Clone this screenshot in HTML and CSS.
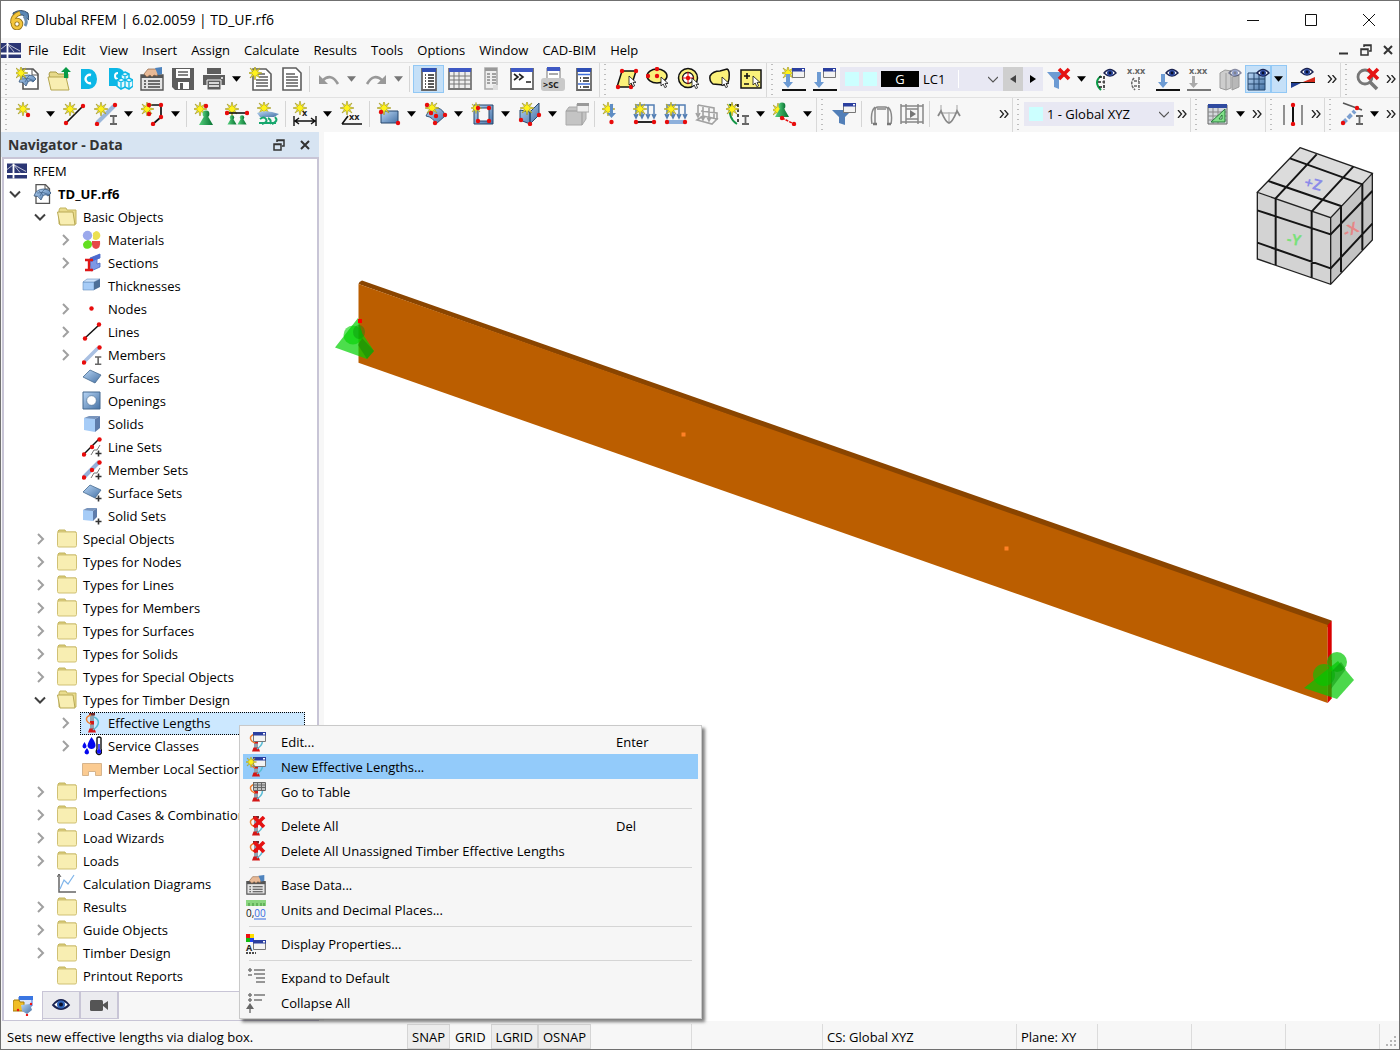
FILE: index.html
```html
<!DOCTYPE html>
<html lang="en">
<head>
<meta charset="utf-8">
<title>Dlubal RFEM | 6.02.0059 | TD_UF.rf6</title>
<link rel="stylesheet" href="styles.css">
</head>
<body>
<svg class="sprite" aria-hidden="true">
  <defs>
    <linearGradient id="gBlue" x1="0" y1="0" x2="1" y2="1"><stop offset="0" stop-color="#b9d6f5"/><stop offset="1" stop-color="#4672a5"/></linearGradient>
    <linearGradient id="gGreen" x1="0" y1="0" x2="1" y2="0"><stop offset="0" stop-color="#55d07d"/><stop offset="1" stop-color="#087332"/></linearGradient>
    <g id="star"><path d="M0-7 1.2-2.4 5-5 2.4-1.2 7 0 2.4 1.2 5 5 1.2 2.400 0 7-1.200 2.400-5 5-2.400 1.200-7 0-2.400-1.200-5-5-1.200-2.400Z" fill="#fff21a" stroke="#a39a2c" stroke-width=".7"/></g>
    <g id="dot"><circle r="2.200" fill="#e80c0c"/></g>
    <g id="win"><path d="M.5.5h12v9H.5z" fill="#f3f3f3" stroke="#777"/><path d="M0 0h13v3.500H0z" fill="#2b3f9f"/><path d="M10 1h2v1.500h-2z" fill="#fff"/></g>
    <g id="eye"><path d="M-6 0Q0-7 6 0 0 6-6 0Z" fill="#fff" stroke="#1b2350" stroke-width="1.400"/><circle r="3" fill="#27449b"/><circle r="1.400" fill="#0a0f2a"/></g>
    <g id="cross"><path d="M-5-5 5 5M5-5-5 5" stroke="#e51212" stroke-width="3.600"/></g>
    <g id="cursor"><path d="M0 0v9l2.200-2 1.600 3.600 1.800-.8L4 6.400h3Z" fill="#fff" stroke="#111" stroke-width=".8"/></g>
    <g id="beamI"><path d="M0 0h7M0 8h7M3.500 0v8" stroke="#666" stroke-width="1.800" fill="none"/></g>
    <g id="plus"><path d="M-3 0h6M0-3v6" stroke="#333" stroke-width="1.600"/></g>
    <g id="dome"><path d="M-8 0Q-6-7 2-7q5 0 7 4L6 0Q2-4-1 4-4-1-8 0Z" fill="url(#gBlue)" stroke="#35577d" stroke-width=".8"/><path d="M-5-3Q2-5 7-1M-3-5Q0-3 1 0M3-7Q0-5-2 0" stroke="#35577d" stroke-width=".6" fill="none"/></g>
    <g id="coneG"><path d="M0-5-7 7H7Z" fill="url(#gGreen)"/><circle cy="-4" r="3.400" fill="url(#gGreen)"/></g>
    <g id="brace"><path d="M8 2h4v16H8z" fill="#8fa3b0"/><path d="M7 0h6v2.500H7z" fill="#702828"/><path d="M8 8h4v3.500H8zM6 19.500l1.500-4h5l1.500 4z" fill="#d31616"/><path d="M9 2C2 4 4 9 9 11" stroke="#ef7d2d" fill="none" stroke-width="1.500"/><path d="M12 4c6 3 6 8-1 13" stroke="#58bcd6" fill="none" stroke-width="1.500"/></g>
    <g id="handcard"><path d="M1 8h22v15H1z" fill="#e4e4e4" stroke="#555" stroke-width="1.400"/><path d="M1 8h22v3H1z" fill="#555"/><path d="M4 14h2M8 14h12M4 17h2M8 17h12M4 20h2M8 20h12" stroke="#444" stroke-width="1.300"/><path d="M4 7l4-5h8l3 3-2 4-3-1-2 2-2-2-3 2z" fill="#e8b996" stroke="#8c6344" stroke-width=".7"/><path d="M15 1l7-1v7l-4 1z" fill="#4e83bd"/></g>
  </defs>

  <symbol id="caret" viewBox="0 0 10 6"><path d="M0 0h10L5 6z" fill="currentColor"/></symbol>
  <symbol id="chev-r" viewBox="0 0 16 16"><path d="M6 3l5 5-5 5" fill="none" stroke="#a0a0a0" stroke-width="2"/></symbol>
  <symbol id="chev-d" viewBox="0 0 16 16"><path d="M3 5.500l5 5 5-5" fill="none" stroke="#404040" stroke-width="2"/></symbol>
  <symbol id="chev-s" viewBox="0 0 10 10"><path d="M0 3l5 5 5-5" fill="none" stroke="#555" stroke-width="1.200"/></symbol>
  <symbol id="more" viewBox="0 0 10 8"><path d="M1 0l3.500 4L1 8M5.500 0 9 4 5.500 8" fill="none" stroke="#222" stroke-width="1.300"/></symbol>

  <symbol id="app" viewBox="0 0 20 20"><path d="M4 3Q12-2 19 3l1 7-5-4Q12 3 5 8Z" fill="#5b87b5" stroke="#2f4a69"/><path d="M15 6q4 5 1 10" stroke="#6c8fb3" stroke-width="3" fill="none"/><path d="M11 3Q3 6 3.500 13" stroke="#96761d" stroke-width="4.800" fill="none"/><circle cx="8" cy="14" r="4" fill="#fff" stroke="#96761d" stroke-width="4.600"/><path d="M11 3Q3 6 3.500 13" stroke="#f4c63c" stroke-width="3" fill="none"/><circle cx="8" cy="14" r="4" fill="none" stroke="#f4c63c" stroke-width="2.800"/></symbol>
  <symbol id="bridge" viewBox="0 0 20 15"><path d="M0 0h20v15H0z" fill="#2b3674"/><path d="M0 10.500h20M6.500 0v15" stroke="#fff" stroke-width="1.800"/><path d="M6.500 1 0 6M6.500 1 19 8M6.500 1 13 9" stroke="#fff" stroke-width=".7"/></symbol>
  <symbol id="modeldoc" viewBox="0 0 20 20"><path d="M4 .7h9.500l4 4v14.600H4z" fill="#fff" stroke="#555" stroke-width="1.300"/><path d="M13 1v4h4" fill="none" stroke="#555"/><use href="#dome" x="10" y="12"/></symbol>

  <symbol id="new" viewBox="0 0 24 24"><path d="M7 2h10l5 5v15H7z" fill="#fff" stroke="#555" stroke-width="1.600"/><path d="M16 2v6h6" fill="none" stroke="#555"/><use href="#dome" x="11" y="15"/><use href="#star" x="5" y="6"/></symbol>
  <symbol id="open" viewBox="0 0 24 24"><path d="M2 7l1-2h6l2 2h10v4H3z" fill="#e6d98a" stroke="#a89a45"/><path d="M1 10h18l3 13H4z" fill="#f8eeb1" stroke="#b5a650"/><path d="M19 0l5 5h-3v6h-4V5h-3z" fill="#0a9a47"/></symbol>
  <symbol id="dcloud" viewBox="0 0 24 24"><path d="M3 2h8a8 10 0 0 1 0 20H3z" fill="#0cb7e6"/><path d="M13 8a4.200 4.200 0 1 0 0 8" fill="none" stroke="#fff" stroke-width="2.400"/></symbol>
  <symbol id="cubes" viewBox="0 0 24 24"><path d="M0 1h8a8 8 0 0 1 8 7L8 19H0z" fill="#0cb7e6"/><path d="M9 6a3 3 0 1 0 0 6" fill="none" stroke="#fff" stroke-width="2"/><path d="M16 5l4 2v4l4 2v6l-4 3-4-2-4 2-4-3v-6l4-2V7z" fill="#e6f8fd" stroke="#0cb7e6" stroke-width="1.500"/><path d="M12 7l4 2 4-2M16 9v5M8 13l4 2 4-2 4 2 4-2M12 15v6M20 15v6M16 13v7M12 11l4 2 4-2" stroke="#0cb7e6" stroke-width="1.300" fill="none"/></symbol>
  <symbol id="base" viewBox="0 0 24 24"><use href="#handcard"/></symbol>
  <symbol id="save" viewBox="0 0 24 24"><path d="M1 1h22v22H4l-3-3z" fill="#5d5d5d"/><path d="M5 2h14v9H5z" fill="#fff"/><path d="M7 5h10M7 8h10" stroke="#5d5d5d" stroke-width="1.400"/><path d="M7 15h11v7H7z" fill="#fff"/><path d="M9 16h3v6H9z" fill="#5d5d5d"/></symbol>
  <symbol id="print" viewBox="0 0 24 24"><path d="M5 1h14v6H5zM1 8h22v10H1z" fill="#5d5d5d"/><path d="M5 13h14v10H5z" fill="#5d5d5d" stroke="#f7f7f7"/><path d="M7 16h10M7 19h10" stroke="#fff" stroke-width="1.400"/><circle cx="20" cy="11" r="1" fill="#fff"/></symbol>
  <symbol id="list" viewBox="0 0 24 24"><path d="M3 1h13l5 5v17H3z" fill="#fff" stroke="#5d5d5d" stroke-width="1.600"/><path d="M6 7h9M6 10h12M6 13h12M6 16h12M6 19h12" stroke="#5d5d5d" stroke-width="1.300"/></symbol>
  <symbol id="newlist" viewBox="0 0 24 24"><path d="M4 2h13l5 5v16H4z" fill="#fff" stroke="#5d5d5d" stroke-width="1.600"/><path d="M9 7h7M10 10h9M7 13h12M7 16h12M7 19h12" stroke="#5d5d5d" stroke-width="1.300"/><use href="#star" x="6" y="6"/></symbol>
  <symbol id="undo" viewBox="0 0 24 24"><path d="M5 14Q14 5 21 17" fill="none" stroke="#999" stroke-width="2.600"/><path d="M2 8v9h9z" fill="#999"/></symbol>
  <symbol id="redo" viewBox="0 0 24 24"><path d="M19 14Q10 5 3 17" fill="none" stroke="#999" stroke-width="2.600"/><path d="M22 8v9h-9z" fill="#999"/></symbol>
  <symbol id="navp" viewBox="0 0 24 24"><path d="M5 2h14v21H5z" fill="#fff" stroke="#666" stroke-width="1.800"/><path d="M5 1h14v4H5z" fill="#2f4fb5"/><path d="M8 8h1M8 11h1M8 14h1M8 17h1M8 20h1M11 8h6M11 11h6M11 14h6M11 17h6M11 20h6" stroke="#222" stroke-width="1.500"/></symbol>
  <symbol id="tablep" viewBox="0 0 24 24"><path d="M1 2h22v20H1z" fill="#eee" stroke="#777" stroke-width="1.800"/><path d="M1 1h22v4H1z" fill="#3f59c4"/><path d="M1 9h22M1 13h22M1 17h22M6 5v17M11 5v17M17 5v17" stroke="#777"/></symbol>
  <symbol id="docg" viewBox="0 0 24 24"><path d="M6 1h12v21H6z" fill="#eee" stroke="#aaa" stroke-width="1.600"/><path d="M6 1h12v3H6z" fill="#999"/><path d="M8 7h3M13 7h4M8 10h3M13 10h4M8 13h3M13 13h4M8 16h3M13 16h4" stroke="#888" stroke-width="1.500"/><path d="M14 18h5v5h-5z" fill="#ddd"/></symbol>
  <symbol id="console" viewBox="0 0 24 24"><path d="M1 2h22v20H1z" fill="#fff" stroke="#666" stroke-width="1.800"/><path d="M1 1h22v4H1z" fill="#3f59c4"/><path d="M4 7l4 3-4 3M9 7l4 3-4 3M16 15h5" fill="none" stroke="#222" stroke-width="1.600"/></symbol>
  <symbol id="navb" viewBox="0 0 24 24"><path d="M5 2h14v21H5z" fill="#fff" stroke="#666" stroke-width="1.800"/><path d="M5 1h14v4H5z" fill="#2f4fb5"/><path d="M8 11h1M8 14h1M8 20h1M11 11h6M11 14h6M11 20h6" stroke="#222" stroke-width="1.500"/><path d="M6 7.500h12M6 17h12" stroke="#3f6fd8" stroke-width="1.600"/></symbol>

  <symbol id="selpoly" viewBox="0 0 24 24"><path d="M7 4h14l-5 16H2z" fill="#fbf17a" stroke="#111" stroke-width="1.500"/><use href="#dot" x="7" y="4"/><use href="#dot" x="21" y="4"/><use href="#dot" x="3" y="20"/><use href="#dot" x="16" y="20"/><use href="#cursor" x="14" y="9"/></symbol>
  <symbol id="selell" viewBox="0 0 24 24"><ellipse cx="11" cy="9" rx="10" ry="7" fill="#fbf17a" stroke="#111" stroke-width="1.500"/><use href="#dot" x="11" y="2"/><use href="#dot" x="11" y="9"/><use href="#dot" x="2" y="9"/><use href="#cursor" x="15" y="10"/></symbol>
  <symbol id="selring" viewBox="0 0 24 24"><circle cx="11" cy="11" r="9.500" fill="#fbf17a" stroke="#111" stroke-width="1.500"/><circle cx="11" cy="11" r="5.500" fill="#fff" stroke="#111" stroke-width="1.300"/><use href="#dot" x="11" y="11"/><path d="M5 11h12M11 5v12" stroke="#e80c0c"/><use href="#cursor" x="15" y="11"/></symbol>
  <symbol id="selfree" viewBox="0 0 24 24"><path d="M2 9Q5 4 12 4l7-2q3 1 2 10-1 6-5 6L5 17Q1 14 2 9Z" fill="#fbf17a" stroke="#111" stroke-width="1.500"/><use href="#cursor" x="14" y="10"/></symbol>
  <symbol id="selpm" viewBox="0 0 24 24"><path d="M2 3h20v18H2z" fill="#fbf17a" stroke="#111" stroke-width="1.500"/><path d="M5 9h6M8 6v6M5 17h5" stroke="#111" stroke-width="1.600"/><use href="#cursor" x="14" y="9"/></symbol>

  <symbol id="newload" viewBox="0 0 24 24"><use href="#star" x="6" y="6"/><path d="M4 7h4v8h3l-5 6-5-6h3z" fill="#6d9bd3"/><use href="#win" x="10" y="1"/><path d="M0 23h24" stroke="#111" stroke-width="2"/></symbol>
  <symbol id="load" viewBox="0 0 24 24"><path d="M4 5h4v10h3l-5 6-5-6h3z" fill="#6d9bd3"/><use href="#win" x="10" y="1"/><path d="M0 23h24" stroke="#111" stroke-width="2"/></symbol>
  <symbol id="filtx" viewBox="0 0 24 24"><path d="M0 5h19l-7 8v9l-5-2v-7z" fill="#6d9bd3"/><use href="#cross" x="17" y="7"/></symbol>
  <symbol id="supeye" viewBox="0 0 24 24"><path d="M7 9Q-1 15 7 23" stroke="#0b9a45" fill="none" stroke-width="2"/><path d="M5 10h5M4 15h5M5 20h4M10 9v14" stroke="#222" stroke-dasharray="3 1.500" stroke-width="1.600" fill="none"/><use href="#eye" x="16" y="6"/></symbol>
  <symbol id="loadeye" viewBox="0 0 24 24"><path d="M5 7h4v8h3l-5 6-5-6h3z" fill="#6d9bd3"/><use href="#eye" x="16" y="6"/><path d="M0 23h24" stroke="#111" stroke-width="2"/></symbol>
  <symbol id="boxeye" viewBox="0 0 24 24"><path d="M2 6l5-3 6 1v17l-5 2-6-2z" fill="#cdcdcd" stroke="#9c9c9c"/><path d="M8 6v17M14 10l7-2v12l-7 3z" fill="#b8b8b8" stroke="#9c9c9c"/><g opacity=".5"><use href="#eye" x="17" y="6"/></g></symbol>
  <symbol id="grideye" viewBox="0 0 24 24"><path d="M2 6h17v17H2z" fill="url(#gBlue)" stroke="#27476d"/><path d="M2 12h17M2 17h17M8 6v17M13 6v17" stroke="#27476d"/><use href="#eye" x="17" y="6"/></symbol>
  <symbol id="diag" viewBox="0 0 24 24"><path d="M0 15h12L0 21z" fill="#203e91"/><path d="M12 15l12-5v5z" fill="#d52a1b"/><path d="M0 15.500h24" stroke="#111"/><use href="#eye" x="16" y="5"/></symbol>
  <symbol id="zoomx" viewBox="0 0 24 24"><circle cx="9" cy="10" r="7" fill="none" stroke="#777" stroke-width="2.800"/><path d="M14 15l7 7" stroke="#777" stroke-width="3.600"/><use href="#cross" x="17" y="7"/></symbol>

  <symbol id="nnode" viewBox="0 0 24 24"><use href="#star" x="7" y="7"/><use href="#dot" x="12" y="13"/></symbol>
  <symbol id="nline" viewBox="0 0 24 24"><path d="M3 21 20 4" stroke="#111" stroke-width="1.700"/><use href="#star" x="7" y="7"/><use href="#dot" x="3" y="21"/><use href="#dot" x="20" y="4"/></symbol>
  <symbol id="nmember" viewBox="0 0 24 24"><path d="M3 21 20 4" stroke="#9bb7da" stroke-width="4"/><use href="#star" x="7" y="7"/><use href="#dot" x="3" y="22"/><use href="#dot" x="21" y="3"/><use href="#beamI" x="16" y="14"/></symbol>
  <symbol id="npoly" viewBox="0 0 24 24"><path d="M8 12V3h12v12l-8 7" stroke="#111" stroke-width="1.700" fill="none"/><use href="#star" x="6" y="7"/><use href="#dot" x="8" y="3"/><use href="#dot" x="20" y="3"/><use href="#dot" x="8" y="12"/><use href="#dot" x="20" y="15"/><use href="#dot" x="12" y="22"/></symbol>
  <symbol id="nsup" viewBox="0 0 24 24"><use href="#star" x="6" y="7"/><use href="#coneG" x="12" y="16"/><use href="#dot" x="12" y="4"/></symbol>
  <symbol id="lsup" viewBox="0 0 24 24"><use href="#star" x="7" y="7"/><path d="M2 11h20" stroke="#111" stroke-width="1.600"/><g transform="translate(7 18) scale(.65)"><use href="#coneG"/></g><g transform="translate(17 18) scale(.65)"><use href="#coneG"/></g><use href="#dot" x="2" y="11"/><use href="#dot" x="22" y="11"/></symbol>
  <symbol id="ssup" viewBox="0 0 24 24"><use href="#star" x="8" y="6"/><path d="M1 11q9-4 22 1l-5 3H4z" fill="url(#gBlue)"/><path d="M4 17q4-3 6 0t-4 5M12 16q4 2 2 6M19 15q4 4-3 7M3 21h17" stroke="#17a76d" fill="none" stroke-width="2"/></symbol>
  <symbol id="nsurf" viewBox="0 0 24 24"><path d="M4 9h17v12H4z" fill="url(#gBlue)" stroke="#27476d"/><use href="#star" x="7" y="6"/><use href="#dot" x="4" y="10"/><use href="#dot" x="21" y="21"/></symbol>
  <symbol id="ncurv" viewBox="0 0 24 24"><path d="M2 14Q6 4 14 6q6 2 7 8l-9 8q-3-7-10-8z" fill="url(#gBlue)" stroke="#35577d"/><use href="#star" x="8" y="6"/><use href="#dot" x="3" y="3"/><use href="#dot" x="7" y="11"/><use href="#dot" x="21" y="13"/><use href="#dot" x="11" y="21"/><use href="#dot" x="12" y="14"/></symbol>
  <symbol id="nopen" viewBox="0 0 24 24"><path d="M3 3h19v19H3z" fill="url(#gBlue)" stroke="#27476d"/><path d="M7 6h11v13H7z" fill="#f7f7f7" stroke="#27476d"/><g transform="translate(5 6) scale(.8)"><use href="#star"/></g><use href="#dot" x="7" y="6"/><use href="#dot" x="18" y="6"/><use href="#dot" x="7" y="19"/><use href="#dot" x="18" y="19"/></symbol>
  <symbol id="nsolid" viewBox="0 0 24 24"><path d="M2 8l10 2v12L2 18zM12 10l9-9v12l-9 9z" fill="url(#gBlue)" stroke="#27476d"/><use href="#star" x="9" y="6"/><use href="#dot" x="3" y="18"/><use href="#dot" x="12" y="22"/><use href="#dot" x="21" y="13"/></symbol>
  <symbol id="gsolid" viewBox="0 0 24 24"><path d="M1 9l3-4h17v12l-4 6H1z" fill="#c4c4c4" stroke="#aaa"/><path d="M1 9h16v14M17 9l4-4" fill="none" stroke="#9b9b9b"/><path d="M12 2h12v8H12z" fill="#eee" stroke="#aaa"/><path d="M12 1h12v3H12z" fill="#999"/></symbol>
  <symbol id="nodeload" viewBox="0 0 24 24"><use href="#star" x="6" y="7"/><path d="M8 2h3v9h3l-4.500 5L5 11h3z" fill="#5f8dc4"/><use href="#dot" x="9.500" y="20"/></symbol>
  <symbol id="lineload" viewBox="0 0 24 24"><path d="M3 3h18v12M3 3v12M9 3v12M15 3v12M1 12l2 4 2-4M7 12l2 4 2-4M13 12l2 4 2-4M19 12l2 4 2-4" fill="none" stroke="#547fb4" stroke-width="1.500"/><use href="#star" x="7" y="7"/><path d="M2 20h20" stroke="#111" stroke-width="1.800"/><use href="#dot" x="3" y="20"/><use href="#dot" x="21" y="20"/></symbol>
  <symbol id="memload" viewBox="0 0 24 24"><path d="M3 3h18v12M3 3v12M9 3v12M15 3v12M1 12l2 4 2-4M7 12l2 4 2-4M13 12l2 4 2-4M19 12l2 4 2-4" fill="none" stroke="#547fb4" stroke-width="1.500"/><use href="#star" x="7" y="7"/><path d="M2 20h20" stroke="#8db0dc" stroke-width="4"/><use href="#dot" x="3" y="20"/><use href="#dot" x="21" y="20"/></symbol>
  <symbol id="gload" viewBox="0 0 24 24"><path d="M3 3l16 3v10M3 3v11M8 4v13M14 5v13M2 18l6-4 14 3-5 5zM6 9l16 2v7M1 11l2 4 2-4M6 14l2 4 2-4M12 15l2 4 2-4" fill="none" stroke="#a2a2a2" stroke-width="1.600"/></symbol>
  <symbol id="imperf" viewBox="0 0 24 24"><path d="M4 2Q2 17 11 22" stroke="#149747" stroke-width="2" fill="none"/><path d="M12 2v20M4 3h8" stroke="#111" stroke-dasharray="3 2" stroke-width="1.500"/><use href="#star" x="6" y="7"/><use href="#beamI" x="16" y="14"/></symbol>
  <symbol id="supmove" viewBox="0 0 24 24"><use href="#star" x="5" y="8"/><use href="#coneG" x="9" y="8"/><path d="M9 16l10 5" stroke="#e80c0c" stroke-width="1.500" stroke-dasharray="3 1"/><use href="#dot" x="9" y="16"/><use href="#dot" x="21" y="22"/></symbol>
  <symbol id="filtwin" viewBox="0 0 24 24"><path d="M0 8h20l-7 7v8l-6-2v-6z" fill="#527fb8"/><use href="#win" x="11" y="1"/></symbol>
  <symbol id="frame" viewBox="0 0 24 24"><path d="M6 22V8q0-3 3-3h7q3 0 3 3v14M3 22Q1 10 6 5M22 22q2-12-3-17M8 7h9" fill="none" stroke="#888" stroke-width="1.500"/><path d="M4 22h4M18 22h4" stroke="#777" stroke-width="2.500"/></symbol>
  <symbol id="film" viewBox="0 0 24 24"><path d="M1 2v20M23 2v20M6 2v20M18 2v20M1 4h22M1 20h22M6 7h12M6 17h12" fill="none" stroke="#888" stroke-width="1.500"/><path d="M10 8l6 4-6 4z" fill="#777"/></symbol>
  <symbol id="moment" viewBox="0 0 24 24"><path d="M4 3v8M12 10v11M20 3v8M4 11h16" stroke="#bbb" stroke-width="1.400"/><path d="M1 14 4 9Q9 21 12 21T20 9l3 5" fill="none" stroke="#888" stroke-width="1.800"/></symbol>
  <symbol id="plane" viewBox="0 0 24 24"><path d="M2 3h19v19H2z" fill="#d4d8dc" stroke="#666"/><path d="M2 2h19v4H2z" fill="#2f4a9f"/><path d="M2 10h19M2 14h19M2 18h19M7 6v16M12 6v16" stroke="#888"/><path d="M5 20h14V7z" fill="#82e08a" stroke="#27793a"/><path d="M13 17h3v-4z" fill="#e9f5e9" stroke="#27793a"/></symbol>
  <symbol id="guides" viewBox="0 0 24 24"><path d="M3 3v20M21 3v20" stroke="#777" stroke-width="1.600"/><path d="M12 3v19" stroke="#111" stroke-width="2"/><use href="#dot" x="12" y="3"/><use href="#dot" x="12" y="22"/></symbol>
  <symbol id="release" viewBox="0 0 24 24"><path d="M3 1l19 7" stroke="#555" stroke-width="1.600"/><path d="M3 21 15 9" stroke="#7b9fd0" stroke-width="4" stroke-dasharray="5 2"/><use href="#dot" x="17" y="6"/><use href="#dot" x="3" y="21"/><use href="#beamI" x="16" y="14"/></symbol>

  <symbol id="folder" viewBox="0 0 20 20"><path d="M1 2l1-1h6l1 2h10v4H1z" fill="#d9cc79" stroke="#c3b45f"/><rect x=".5" y="3" width="19" height="15" rx="1.500" fill="#f8eeb2" stroke="#d0c175"/></symbol>
  <symbol id="folder-o" viewBox="0 0 20 20"><path d="M2 3l1-2h6l1 2h9v14H2z" fill="#e9dc8d" stroke="#c3b45f"/><path d="M.5 5H16l2 13H3z" fill="#f8eeb2" stroke="#b8a955"/></symbol>
  <symbol id="materials" viewBox="0 0 20 20"><circle cx="5.500" cy="5.500" r="4.700" fill="#9ba9ec"/><path d="M14 1a4.500 4.500 0 1 1-3 8V3z" fill="#ebe052"/><path d="M6 10q4 1 4 4t-3 4.500Q1 20 1 14q1-3 5-4z" fill="#63df20"/><path d="M10 11h8q1 7-4 8-5-1-4-8z" fill="#e64848"/></symbol>
  <symbol id="sections" viewBox="0 0 20 20"><path d="M8 5l10-4v4l-3 1v5l3-1v4L9 18z" fill="#7d98e6" stroke="#4867c2" stroke-width=".8"/><path d="M8 5l10-4v4L9 9z" fill="#4c6ad0"/><path d="M3 7h8M3 17h8M7 7v10" stroke="#df1717" stroke-width="2.400"/></symbol>
  <symbol id="thick" viewBox="0 0 20 20"><path d="M1 6h11v8H1z" fill="#a6ccf7" stroke="#668fbd" stroke-width=".6"/><path d="M1 6l4-3h13l-6 3z" fill="#cde3fb" stroke="#668fbd" stroke-width=".6"/><path d="M12 6l6-3v8l-6 3z" fill="#4d7099"/></symbol>
  <symbol id="node" viewBox="0 0 20 20"><circle cx="9.500" cy="9.500" r="2.200" fill="#e80c0c"/></symbol>
  <symbol id="line" viewBox="0 0 20 20"><path d="M3 16 17 3" stroke="#111" stroke-width="1.500"/><use href="#dot" x="3" y="16.500"/><use href="#dot" x="17" y="2.500"/></symbol>
  <symbol id="member" viewBox="0 0 20 20"><path d="M3 16 16 3" stroke="#a9c0e2" stroke-width="3.600"/><use href="#dot" x="2" y="17.500"/><use href="#dot" x="17.500" y="2.500"/><g transform="translate(13 12) scale(.9)"><use href="#beamI"/></g></symbol>
  <symbol id="surface" viewBox="0 0 20 20"><path d="M8 2l11 5-6 8L1 9z" fill="url(#gBlue)" stroke="#45698f" stroke-width=".8"/></symbol>
  <symbol id="opening" viewBox="0 0 20 20"><path d="M1 1h17v17H1z" fill="url(#gBlue)" stroke="#45698f"/><circle cx="9.500" cy="9.500" r="4.800" fill="#fff" stroke="#45698f" stroke-width=".6"/></symbol>
  <symbol id="solid" viewBox="0 0 20 20"><path d="M2 4h11v14l-11-2z" fill="#a6ccf7"/><path d="M2 4l5-2h11l-5 3z" fill="#7894bc"/><path d="M13 5l5-3v12l-5 4z" fill="#5e7cab"/></symbol>
  <symbol id="lineset" viewBox="0 0 20 20"><path d="M2 17 17 2" stroke="#111" stroke-width="1.500"/><path d="M9 18l3-5h3l3-5" stroke="#777" fill="none"/><use href="#dot" x="2" y="17.500"/><use href="#dot" x="10" y="10"/><use href="#dot" x="17.500" y="2.500"/><use href="#plus" x="16.500" y="16.500"/></symbol>
  <symbol id="memberset" viewBox="0 0 20 20"><path d="M2 17 17 2" stroke="#94b0da" stroke-width="4"/><path d="M9 18l3-5h3l3-5" stroke="#777" fill="none"/><use href="#dot" x="2" y="17.500"/><use href="#dot" x="10" y="10"/><use href="#dot" x="17.500" y="2.500"/><use href="#plus" x="16.500" y="16.500"/></symbol>
  <symbol id="surfaceset" viewBox="0 0 20 20"><path d="M8 2l11 5-6 8L1 9z" fill="url(#gBlue)" stroke="#45698f" stroke-width=".8"/><use href="#plus" x="16.500" y="15.500"/></symbol>
  <symbol id="solidset" viewBox="0 0 20 20"><path d="M1 4h10v11l-10-1z" fill="#a6ccf7"/><path d="M1 4l4-2h10l-4 3z" fill="#7894bc"/><path d="M11 5l4-3v9l-4 4z" fill="#5e7cab"/><use href="#plus" x="16.500" y="15.500"/></symbol>
  <symbol id="eff" viewBox="0 0 20 20"><use href="#brace"/></symbol>
  <symbol id="service" viewBox="0 0 20 20"><path d="M9.500 1q4.500 6 4 9-1 3-4 3t-4-3q0-3 4-9zM2.500 6q2 3 2 4.500t-2 2q-2-.5-2-2T2.500 6zM5 12q2 3 2 4.500t-2 2q-2.500-.5-2.500-2T5 12z" fill="#0508ef"/><path d="M15 2q2-2 4 0v11q1.500 3 0 4.500-2 2-4 0-1.500-2 0-4.500z" fill="#fff" stroke="#111" stroke-width="1.400"/><circle cx="17" cy="15.500" r="2.200" fill="#11f"/><path d="M17 8v7" stroke="#11f" stroke-width="1.500"/></symbol>
  <symbol id="notch" viewBox="0 0 20 20"><path d="M.5 4.500h19v12h-6v-4h-7v4h-6z" fill="#fbcb91" stroke="#d6b48c"/></symbol>
  <symbol id="chart" viewBox="0 0 20 20"><path d="M2 0v18h17" fill="none" stroke="#666" stroke-width="1.500"/><path d="M0 3l2-3 2 3" fill="none" stroke="#666"/><path d="M3 15l4-9 4 4 6-9" fill="none" stroke="#7fb5ea" stroke-width="1.200"/></symbol>

  <symbol id="m-edit" viewBox="0 0 20 20"><use href="#brace"/><use href="#win" x="7" y="0"/></symbol>
  <symbol id="m-new" viewBox="0 0 20 20"><use href="#brace"/><use href="#win" x="7" y="0"/><g transform="translate(5 5) scale(.8)"><use href="#star"/></g></symbol>
  <symbol id="m-table" viewBox="0 0 20 20"><use href="#brace"/><path d="M7.500 .5h12v8h-12zM7.500 3h12M7.500 5.500h12M11.500 .5v8M15.500 .5v8" fill="#c2c2c2" stroke="#666"/></symbol>
  <symbol id="m-del" viewBox="0 0 20 20"><use href="#brace"/><use href="#cross" x="13" y="6"/></symbol>
  <symbol id="m-exp" viewBox="0 0 20 20"><path d="M2 2h4M4 0v4M2 7h4M8 2h11M8 6h11M10 10h9M10 14h9" stroke="#777" stroke-width="1.500"/></symbol>
  <symbol id="m-col" viewBox="0 0 20 20"><path d="M2 2h4M4 0v4M2 7h4M4 5v4M8 2h11M8 7h8M4 13v7" stroke="#777" stroke-width="1.500"/><path d="M0 16l4-6 4 6z" fill="#666"/></symbol>

  <symbol id="t-data" viewBox="0 0 20 20"><path d="M6 1h13v9H6z" fill="#dbe6fa" stroke="#3a6ed8"/><path d="M6 0h14v4H6z" fill="#3a76e2"/><path d="M0 6l1-2h5l1 2h4v9H0z" fill="#f0bd25" stroke="#a37c0d"/><path d="M8 9l9-1 2 6-5 4-5-3z" fill="url(#gBlue)"/><g fill="#e11"><circle cx="5" cy="14" r="1.200"/><circle cx="18" cy="8" r="1.200"/><circle cx="14" cy="19" r="1.200"/></g></symbol>
  <symbol id="t-eye" viewBox="0 0 20 20"><path d="M2 10q8-10 16 0-8 8-16 0z" fill="#fff" stroke="#1b2350" stroke-width="1.800"/><circle cx="10" cy="9.500" r="4" fill="#2e62b8"/><circle cx="10" cy="9.500" r="2" fill="#0a0f2a"/></symbol>
  <symbol id="t-cam" viewBox="0 0 20 20"><rect x="1" y="5" width="13" height="11" rx="1.500" fill="#555"/><path d="M13 10l6-4v9z" fill="#555"/></symbol>
</svg>

<div class="window">
  <header class="titlebar">
    <svg class="app-icon"><use href="#app"/></svg>
    <h1 class="title">Dlubal RFEM | 6.02.0059 | TD_UF.rf6</h1>
    <button class="winbtn" aria-label="Minimize"><svg viewBox="0 0 12 12"><path d="M0 6.500h12" stroke="#111"/></svg></button>
    <button class="winbtn" aria-label="Maximize"><svg viewBox="0 0 12 12"><path d="M.5.5h11v11H.5z" fill="none" stroke="#111"/></svg></button>
    <button class="winbtn" aria-label="Close"><svg viewBox="0 0 12 12"><path d="M0 0l12 12M12 0 0 12" stroke="#111"/></svg></button>
  </header>

  <nav class="menubar">
    <svg class="bridge"><use href="#bridge"/></svg>
    <button>File</button><button>Edit</button><button>View</button><button>Insert</button><button>Assign</button><button>Calculate</button><button>Results</button><button>Tools</button><button>Options</button><button>Window</button><button>CAD-BIM</button><button>Help</button>
    <div class="mdi">
      <button aria-label="Minimize document"><svg viewBox="0 0 12 12"><path d="M1 9.500h9" stroke="#333" stroke-width="2"/></svg></button>
      <button aria-label="Restore document"><svg viewBox="0 0 12 12"><path d="M4 3V1h7v6H9M1 5h7v6H1zM1 5.500h7M4 1.500h7" fill="none" stroke="#333" stroke-width="1.500"/></svg></button>
      <button aria-label="Close document"><svg viewBox="0 0 12 12"><path d="M2 2l8 8M10 2l-8 8" stroke="#333" stroke-width="2"/></svg></button>
    </div>
  </nav>

  <div class="toolbar">
    <div class="group">
      <button class="tool" aria-label="New"><svg><use href="#new"/></svg></button>
      <button class="tool" aria-label="Open"><svg><use href="#open"/></svg></button>
      <button class="tool" aria-label="Dlubal Center"><svg><use href="#dcloud"/></svg></button>
      <button class="tool" aria-label="Blocks"><svg><use href="#cubes"/></svg></button>
      <button class="tool" aria-label="Base data"><svg><use href="#base"/></svg></button>
      <button class="tool" aria-label="Save"><svg><use href="#save"/></svg></button>
      <button class="tool" aria-label="Print"><svg><use href="#print"/></svg></button><button class="drop" aria-label="Print options"><svg><use href="#caret"/></svg></button>
      <button class="tool" aria-label="New report"><svg><use href="#newlist"/></svg></button>
      <button class="tool" aria-label="Reports"><svg><use href="#list"/></svg></button>
      <span class="sep"></span>
      <button class="tool" aria-label="Undo"><svg><use href="#undo"/></svg></button><button class="drop dim" aria-label="Undo list"><svg><use href="#caret"/></svg></button>
      <button class="tool" aria-label="Redo"><svg><use href="#redo"/></svg></button><button class="drop dim" aria-label="Redo list"><svg><use href="#caret"/></svg></button>
      <span class="sep"></span>
      <button class="tool on" aria-label="Navigator"><svg><use href="#navp"/></svg></button>
      <button class="tool" aria-label="Tables"><svg><use href="#tablep"/></svg></button>
      <button class="tool" aria-label="Panel"><svg><use href="#docg"/></svg></button>
      <button class="tool" aria-label="Console"><svg><use href="#console"/></svg></button>
      <button class="tool" aria-label="Script manager"><svg viewBox="0 0 24 24"><path d="M6 1h13v11H6z" fill="#fff" stroke="#777"/><path d="M6 0h13v4H6z" fill="#3f59c4"/><path d="M8 7h9" stroke="#555"/><rect y="11" x="0" width="24" height="13" rx="3" fill="#c9c9c9"/><text x="2" y="21" class="glyph-text">&gt;SC</text></svg></button>
      <button class="tool" aria-label="Control panel"><svg><use href="#navb"/></svg></button>
    </div>
    <div class="group">
      <button class="tool" aria-label="Select by rhomboid"><svg><use href="#selpoly"/></svg></button>
      <button class="tool" aria-label="Select by ellipse"><svg><use href="#selell"/></svg></button>
      <button class="tool" aria-label="Select by annulus"><svg><use href="#selring"/></svg></button>
      <button class="tool" aria-label="Select freehand"><svg><use href="#selfree"/></svg></button>
      <button class="tool" aria-label="Add or remove selection"><svg><use href="#selpm"/></svg></button>
    </div>
    <div class="group grow">
      <button class="tool" aria-label="New load case"><svg><use href="#newload"/></svg></button>
      <button class="tool" aria-label="Load cases"><svg><use href="#load"/></svg></button>
      <div class="combo loadcase">
        <span class="swatch"></span><span class="swatch"></span><span class="badge">G</span>
        <select aria-label="Load case"><option>LC1</option></select>
        <span class="rule"></span>
        <svg><use href="#chev-s"/></svg>
      </div>
      <button class="step off" aria-label="Previous load case"><svg viewBox="0 0 6 8"><path d="M6 0v8L0 4z"/></svg></button>
      <button class="step" aria-label="Next load case"><svg viewBox="0 0 6 8"><path d="M0 0v8l6-4z"/></svg></button>
      <button class="tool" aria-label="Remove filter"><svg><use href="#filtx"/></svg></button><button class="drop" aria-label="Filter options"><svg><use href="#caret"/></svg></button>
      <button class="tool" aria-label="Show supports"><svg><use href="#supeye"/></svg></button>
      <button class="tool" aria-label="Support values"><svg viewBox="0 0 24 24"><path d="M9 11Q4 17 10 23M14 10v13M9 14h5M9 19h5" stroke="#666" stroke-dasharray="3 1" fill="none" stroke-width="1.500"/><text x="2" y="7" class="glyph-text grey">x.xx</text></svg></button>
      <button class="tool" aria-label="Show loads"><svg><use href="#loadeye"/></svg></button>
      <button class="tool" aria-label="Load values"><svg viewBox="0 0 24 24"><path d="M5 9h3v7h3l-4.500 5L2 16h3z" fill="#aaa"/><text x="2" y="7" class="glyph-text grey">x.xx</text><path d="M0 23h24" stroke="#777" stroke-width="2"/></svg></button>
      <button class="tool" aria-label="Show solids"><svg><use href="#boxeye"/></svg></button>
      <button class="tool on narrow" aria-label="Show mesh"><svg><use href="#grideye"/></svg></button><button class="drop on" aria-label="Mesh options"><svg><use href="#caret"/></svg></button>
      <button class="tool" aria-label="Show results"><svg><use href="#diag"/></svg></button>
      <button class="more" aria-label="More"><svg><use href="#more"/></svg></button>
    </div>
    <div class="group">
      <button class="tool" aria-label="Reset zoom"><svg><use href="#zoomx"/></svg></button>
      <button class="more" aria-label="More"><svg><use href="#more"/></svg></button>
    </div>
  </div>

  <div class="toolbar">
    <div class="group">
      <button class="tool" aria-label="New node"><svg><use href="#nnode"/></svg></button><button class="drop" aria-label="Node types"><svg><use href="#caret"/></svg></button>
      <button class="tool" aria-label="New line"><svg><use href="#nline"/></svg></button>
      <button class="tool" aria-label="New member"><svg><use href="#nmember"/></svg></button><button class="drop" aria-label="Member types"><svg><use href="#caret"/></svg></button>
      <button class="tool" aria-label="New polyline"><svg><use href="#npoly"/></svg></button><button class="drop" aria-label="Line types"><svg><use href="#caret"/></svg></button>
      <span class="sep"></span>
      <button class="tool" aria-label="Nodal support"><svg><use href="#nsup"/></svg></button>
      <button class="tool" aria-label="Line support"><svg><use href="#lsup"/></svg></button>
      <button class="tool" aria-label="Surface support"><svg><use href="#ssup"/></svg></button>
      <span class="sep"></span>
      <button class="tool" aria-label="Dimension"><svg viewBox="0 0 24 24"><use href="#star" x="7" y="6"/><path d="M1 14v10M23 14v10M2 19h20M6 16l-4 3 4 3M18 16l4 3-4 3" stroke="#111" fill="none" stroke-width="1.400"/><text x="9" y="14" class="glyph-text">x</text></svg></button><button class="drop" aria-label="Dimension types"><svg><use href="#caret"/></svg></button>
      <button class="tool" aria-label="Annotation"><svg viewBox="0 0 24 24"><use href="#star" x="7" y="6"/><path d="M2 22h20M2 22l6-8" stroke="#111" stroke-width="1.600"/><text x="9" y="18" class="glyph-text">xx</text></svg></button>
      <span class="sep"></span>
      <button class="tool" aria-label="New surface"><svg><use href="#nsurf"/></svg></button><button class="drop" aria-label="Surface types"><svg><use href="#caret"/></svg></button>
      <button class="tool" aria-label="Curved surface"><svg><use href="#ncurv"/></svg></button><button class="drop" aria-label="Curved surface types"><svg><use href="#caret"/></svg></button>
      <button class="tool" aria-label="New opening"><svg><use href="#nopen"/></svg></button><button class="drop" aria-label="Opening types"><svg><use href="#caret"/></svg></button>
      <button class="tool" aria-label="New solid"><svg><use href="#nsolid"/></svg></button><button class="drop" aria-label="Solid types"><svg><use href="#caret"/></svg></button>
      <button class="tool" aria-label="Solid details"><svg><use href="#gsolid"/></svg></button>
      <span class="sep"></span>
      <button class="tool" aria-label="Nodal load"><svg><use href="#nodeload"/></svg></button>
      <button class="tool" aria-label="Line load"><svg><use href="#lineload"/></svg></button>
      <button class="tool" aria-label="Member load"><svg><use href="#memload"/></svg></button>
      <button class="tool" aria-label="Surface load"><svg><use href="#gload"/></svg></button>
      <button class="tool" aria-label="Imperfection"><svg><use href="#imperf"/></svg></button><button class="drop" aria-label="Imperfection types"><svg><use href="#caret"/></svg></button>
      <button class="tool" aria-label="Imposed deformation"><svg><use href="#supmove"/></svg></button><button class="drop" aria-label="Deformation types"><svg><use href="#caret"/></svg></button>
    </div>
    <div class="group grow">
      <button class="tool" aria-label="Filter"><svg><use href="#filtwin"/></svg></button>
      <span class="sep"></span>
      <button class="tool" aria-label="Deformation"><svg><use href="#frame"/></svg></button>
      <button class="tool" aria-label="Animation"><svg><use href="#film"/></svg></button>
      <span class="sep"></span>
      <button class="tool" aria-label="Moments"><svg><use href="#moment"/></svg></button>
      <button class="more" aria-label="More"><svg><use href="#more"/></svg></button>
    </div>
    <div class="group">
      <div class="combo coords">
        <span class="swatch"></span>
        <select aria-label="Coordinate system"><option>1 - Global XYZ</option></select>
        <svg><use href="#chev-s"/></svg>
      </div>
      <button class="more" aria-label="More"><svg><use href="#more"/></svg></button>
    </div>
    <div class="group">
      <button class="tool" aria-label="Work plane"><svg><use href="#plane"/></svg></button><button class="drop" aria-label="Work plane types"><svg><use href="#caret"/></svg></button>
      <button class="more" aria-label="More"><svg><use href="#more"/></svg></button>
    </div>
    <div class="group">
      <button class="tool" aria-label="Guidelines"><svg><use href="#guides"/></svg></button>
      <button class="more" aria-label="More"><svg><use href="#more"/></svg></button>
    </div>
    <div class="group">
      <button class="tool" aria-label="Member hinge"><svg><use href="#release"/></svg></button><button class="drop" aria-label="Hinge types"><svg><use href="#caret"/></svg></button>
      <button class="more" aria-label="More"><svg><use href="#more"/></svg></button>
    </div>
  </div>

  <main class="work">
    <aside class="navigator">
      <div class="nav-head">
        <h2>Navigator - Data</h2>
        <button aria-label="Float panel"><svg viewBox="0 0 12 12"><path d="M4 3V1h7v6H9M1 5h7v6H1zM1 5.500h7M4 1.500h7" fill="none" stroke="#333" stroke-width="1.500"/></svg></button>
        <button aria-label="Close panel"><svg viewBox="0 0 12 12"><path d="M2 2l8 8M10 2l-8 8" stroke="#333" stroke-width="2"/></svg></button>
      </div>
      <div class="tree">
        <div class="row"><span class="item"><svg class="ico"><use href="#bridge"/></svg>RFEM</span></div>
        <div class="row"><svg class="chev"><use href="#chev-d"/></svg><span class="item file"><svg class="ico"><use href="#modeldoc"/></svg>TD_UF.rf6</span></div>
        <ul>
          <li><div class="row"><svg class="chev"><use href="#chev-d"/></svg><span class="item"><svg class="ico"><use href="#folder-o"/></svg>Basic Objects</span></div>
            <ul>
              <li class="row"><svg class="chev"><use href="#chev-r"/></svg><span class="item"><svg class="ico"><use href="#materials"/></svg>Materials</span></li>
              <li class="row"><svg class="chev"><use href="#chev-r"/></svg><span class="item"><svg class="ico"><use href="#sections"/></svg>Sections</span></li>
              <li class="row"><svg class="chev"></svg><span class="item"><svg class="ico"><use href="#thick"/></svg>Thicknesses</span></li>
              <li class="row"><svg class="chev"><use href="#chev-r"/></svg><span class="item"><svg class="ico"><use href="#node"/></svg>Nodes</span></li>
              <li class="row"><svg class="chev"><use href="#chev-r"/></svg><span class="item"><svg class="ico"><use href="#line"/></svg>Lines</span></li>
              <li class="row"><svg class="chev"><use href="#chev-r"/></svg><span class="item"><svg class="ico"><use href="#member"/></svg>Members</span></li>
              <li class="row"><svg class="chev"></svg><span class="item"><svg class="ico"><use href="#surface"/></svg>Surfaces</span></li>
              <li class="row"><svg class="chev"></svg><span class="item"><svg class="ico"><use href="#opening"/></svg>Openings</span></li>
              <li class="row"><svg class="chev"></svg><span class="item"><svg class="ico"><use href="#solid"/></svg>Solids</span></li>
              <li class="row"><svg class="chev"></svg><span class="item"><svg class="ico"><use href="#lineset"/></svg>Line Sets</span></li>
              <li class="row"><svg class="chev"></svg><span class="item"><svg class="ico"><use href="#memberset"/></svg>Member Sets</span></li>
              <li class="row"><svg class="chev"></svg><span class="item"><svg class="ico"><use href="#surfaceset"/></svg>Surface Sets</span></li>
              <li class="row"><svg class="chev"></svg><span class="item"><svg class="ico"><use href="#solidset"/></svg>Solid Sets</span></li>
            </ul>
          </li>
          <li class="row"><svg class="chev"><use href="#chev-r"/></svg><span class="item"><svg class="ico"><use href="#folder"/></svg>Special Objects</span></li>
          <li class="row"><svg class="chev"><use href="#chev-r"/></svg><span class="item"><svg class="ico"><use href="#folder"/></svg>Types for Nodes</span></li>
          <li class="row"><svg class="chev"><use href="#chev-r"/></svg><span class="item"><svg class="ico"><use href="#folder"/></svg>Types for Lines</span></li>
          <li class="row"><svg class="chev"><use href="#chev-r"/></svg><span class="item"><svg class="ico"><use href="#folder"/></svg>Types for Members</span></li>
          <li class="row"><svg class="chev"><use href="#chev-r"/></svg><span class="item"><svg class="ico"><use href="#folder"/></svg>Types for Surfaces</span></li>
          <li class="row"><svg class="chev"><use href="#chev-r"/></svg><span class="item"><svg class="ico"><use href="#folder"/></svg>Types for Solids</span></li>
          <li class="row"><svg class="chev"><use href="#chev-r"/></svg><span class="item"><svg class="ico"><use href="#folder"/></svg>Types for Special Objects</span></li>
          <li><div class="row"><svg class="chev"><use href="#chev-d"/></svg><span class="item"><svg class="ico"><use href="#folder-o"/></svg>Types for Timber Design</span></div>
            <ul>
              <li class="row"><svg class="chev"><use href="#chev-r"/></svg><span class="item selected"><svg class="ico"><use href="#eff"/></svg>Effective Lengths</span></li>
              <li class="row"><svg class="chev"><use href="#chev-r"/></svg><span class="item"><svg class="ico"><use href="#service"/></svg>Service Classes</span></li>
              <li class="row"><svg class="chev"></svg><span class="item"><svg class="ico"><use href="#notch"/></svg>Member Local Section</span></li>
            </ul>
          </li>
          <li class="row"><svg class="chev"><use href="#chev-r"/></svg><span class="item"><svg class="ico"><use href="#folder"/></svg>Imperfections</span></li>
          <li class="row"><svg class="chev"><use href="#chev-r"/></svg><span class="item"><svg class="ico"><use href="#folder"/></svg>Load Cases &amp; Combinations</span></li>
          <li class="row"><svg class="chev"><use href="#chev-r"/></svg><span class="item"><svg class="ico"><use href="#folder"/></svg>Load Wizards</span></li>
          <li class="row"><svg class="chev"><use href="#chev-r"/></svg><span class="item"><svg class="ico"><use href="#folder"/></svg>Loads</span></li>
          <li class="row"><svg class="chev"></svg><span class="item"><svg class="ico"><use href="#chart"/></svg>Calculation Diagrams</span></li>
          <li class="row"><svg class="chev"><use href="#chev-r"/></svg><span class="item"><svg class="ico"><use href="#folder"/></svg>Results</span></li>
          <li class="row"><svg class="chev"><use href="#chev-r"/></svg><span class="item"><svg class="ico"><use href="#folder"/></svg>Guide Objects</span></li>
          <li class="row"><svg class="chev"><use href="#chev-r"/></svg><span class="item"><svg class="ico"><use href="#folder"/></svg>Timber Design</span></li>
          <li class="row"><svg class="chev"></svg><span class="item"><svg class="ico"><use href="#folder"/></svg>Printout Reports</span></li>
        </ul>
      </div>
      <div class="tabs">
        <button class="tab active" aria-label="Data"><svg><use href="#t-data"/></svg></button>
        <button class="tab" aria-label="Display"><svg><use href="#t-eye"/></svg></button>
        <button class="tab" aria-label="Views"><svg><use href="#t-cam"/></svg></button>
        <span class="tabs-rest"></span>
      </div>

      <div class="context" role="menu">
        <button class="entry" role="menuitem"><svg><use href="#m-edit"/></svg><span>Edit...</span><kbd>Enter</kbd></button>
        <button class="entry hot" role="menuitem"><svg><use href="#m-new"/></svg><span>New Effective Lengths...</span></button>
        <button class="entry" role="menuitem"><svg><use href="#m-table"/></svg><span>Go to Table</span></button>
        <hr>
        <button class="entry" role="menuitem"><svg><use href="#m-del"/></svg><span>Delete All</span><kbd>Del</kbd></button>
        <button class="entry" role="menuitem"><svg><use href="#m-del"/></svg><span>Delete All Unassigned Timber Effective Lengths</span></button>
        <hr>
        <button class="entry" role="menuitem"><svg><use href="#base"/></svg><span>Base Data...</span></button>
        <button class="entry" role="menuitem"><svg viewBox="0 0 20 20"><path d="M0 0h20v6H0z" fill="#8bd680"/><path d="M3 3v3M7 3v3M11 3v3M15 3v3M18 3v3" stroke="#3f8f38"/><text x="0" y="17" class="units">0,<tspan fill="#356ae0">00</tspan></text><path d="M8 19h12" stroke="#356ae0"/></svg><span>Units and Decimal Places...</span></button>
        <hr>
        <button class="entry" role="menuitem"><svg viewBox="0 0 20 20"><path d="M0 0h4v4H0z" fill="#e11"/><path d="M4 0h4v4H4z" fill="#fd0"/><path d="M0 4h4v4H0z" fill="#1b1"/><path d="M4 4h4v4H4z" fill="#24e"/><text x="0" y="17" class="glyph-text">A</text><path d="M0 19h10" stroke="#111" stroke-width="1.600" stroke-dasharray="2 1"/><use href="#win" x="7" y="6"/></svg><span>Display Properties...</span></button>
        <hr>
        <button class="entry" role="menuitem"><svg><use href="#m-exp"/></svg><span>Expand to Default</span></button>
        <button class="entry" role="menuitem"><svg><use href="#m-col"/></svg><span>Collapse All</span></button>
      </div>
    </aside>

    <section class="viewport" aria-label="Model view">
      <svg class="model" viewBox="324 132 1075 889">
        <path d="M358.500 284l1-2 2.500-1.500 969.500 340-3 7z" fill="#8a4500"/>
        <path d="M358.500 284 1327.700 625v78L358.500 362.700z" fill="#bb5e00"/>
        <path d="M1327.700 625l4-4.500v78l-4 4.500z" fill="#d90000"/>
        <path d="M1327.700 660h4v12h-4z" fill="#f00"/>
        <path d="M681.500 432.500h4v4h-4zM1004.500 546.500h4v4h-4z" fill="#ff8126"/>
        <g fill="#00d000">
          <path d="M358 318 335 347.500 367 359 374 351 362 333z" opacity=".7"/>
          <path d="M358 345 362 338 374 351 367 359z" fill="#0a7a0a" opacity=".4"/>
          <circle cx="353" cy="335" r="9.500" opacity=".6"/>
          <ellipse cx="359" cy="332" rx="6" ry="7" fill="#0a8a0a" opacity=".4"/>
        </g>
        <path d="M358 319h4v4h-4z" fill="#f00"/>
        <g fill="#00c800">
          <circle cx="1337" cy="662" r="10" opacity=".7"/>
          <circle cx="1324" cy="675" r="11" opacity=".6"/>
          <path d="M1304 688l34-27 16 19-17 19z" opacity=".7"/>
          <path d="M1331 672l10-10 5 7-15 20z" fill="#0a8f0a" opacity=".5"/>
        </g>
      </svg>
      <svg class="cube" viewBox="0 0 450 480">
        <path d="M180 38 397 115 272 248 52 172z" fill="#dcdcdc"/>
        <path d="M52 172 272 248V448L52 372z" fill="#d3d3d3"/>
        <path d="M272 248 397 115V315L272 448z" fill="#c4c4c4"/>
        <path d="M180 38 397 115 272 248 52 172zM52 172V372L272 448 397 315V115M272 248V448" fill="none" stroke="#222" stroke-width="4"/>
        <path d="M230 58 107 190V390M340 95 215 230V428M150 70 367 148V345M85 138 303 213V412M52 226 272 298 397 168M52 323 272 400 397 266" fill="none" stroke="#151515" stroke-width="6"/>
        <text x="190" y="156" class="axis z" transform="rotate(14 190 156)">+Z</text>
        <text x="138" y="326" class="axis y" transform="rotate(10 138 326)">-Y</text>
        <text x="318" y="308" class="axis x" transform="rotate(-25 318 308)">-X</text>
      </svg>
    </section>
  </main>

  <footer class="status">
    <span class="hint">Sets new effective lengths via dialog box.</span>
    <button class="snap on">SNAP</button><button class="snap">GRID</button><button class="snap on">LGRID</button><button class="snap on">OSNAP</button>
    <span class="cell c100"></span>
    <span class="cell c131"></span>
    <span class="cell c194">CS: Global XYZ</span>
    <span class="cell c81">Plane: XY</span>
    <span class="cell c94"></span>
    <span class="cell c94"></span>
    <span class="cell c94"></span>
    <svg class="grip" viewBox="0 0 12 12"><path d="M9 0h2v2H9zM5 4h2v2H5zM9 4h2v2H9zM1 8h2v2H1zM5 8h2v2H5zM9 8h2v2H9z" fill="#b5b5b5"/></svg>
  </footer>
</div>
</body>
</html>
```

FILE: styles.css
```css
* { box-sizing: border-box; }

body {
  margin: 0;
  font: 13px/20px "Open Sans", "Noto Sans", sans-serif;
  color: #000;
  background: #f7f7f7;
}

button, select, kbd {
  font: inherit;
  color: inherit;
  background: none;
  border: 0;
  margin: 0;
  padding: 0;
}

ul { list-style: none; margin: 0; padding: 0 0 0 25px; }
svg { display: block; flex: none; overflow: visible; }
.sprite { position: absolute; width: 0; height: 0; overflow: hidden; }

.window {
  display: flex;
  flex-direction: column;
  min-height: 100vh;
  border: 1px solid #707070;
}

/* Title bar */
.titlebar { display: flex; align-items: center; height: 37px; padding: 0 1px 0 8px; background: #fff; }
.app-icon { width: 20px; height: 20px; margin-right: 6px; }
.title { flex: 1; margin: 0; font-size: 14px; font-weight: 400; }
.winbtn { display: grid; place-items: center; width: 58px; height: 36px; }
.winbtn svg { width: 12px; height: 12px; }

/* Menu bar */
.menubar { display: flex; align-items: center; height: 24px; }
.bridge { width: 20px; height: 15px; }
.menubar > button { padding: 0 7px; white-space: nowrap; }
.mdi { display: flex; gap: 10px; margin-left: auto; padding-right: 5px; }
.mdi svg { width: 12px; height: 12px; }

/* Toolbars */
.toolbar { display: flex; height: 35px; border-top: 1px solid #e2e2e2; }
.group {
  display: flex;
  align-items: center;
  padding: 0 0 2px 11px;
  border-right: 1px solid #d9d9d9;
  background: radial-gradient(circle, #bdbdbd 1px, transparent 1px) 3px 4px / 4px 5px repeat-y;
}
.group:last-child { border-right: 0; }
.grow { flex: 1; }
.tool { display: grid; place-items: center; width: 31px; height: 28px; }
.tool svg { width: 24px; height: 24px; }
.narrow { width: 26px; }
.drop { display: flex; align-items: center; width: 16px; height: 28px; padding-left: 3px; }
.drop svg { width: 9px; height: 6px; }
.dim { color: #777; }
.on { background: #c5e0f8; outline: 1px solid #92c8f5; outline-offset: -1px; }
.sep { width: 1px; height: 26px; margin: 0 3px 0 2px; background: #d5d5d5; }
.more { width: 16px; height: 28px; margin-left: auto; padding-left: 3px; }
.more svg { width: 10px; height: 8px; }

.glyph-text { font-size: 9px; font-weight: 700; fill: #222; }
.grey { fill: #666; }
.units { font-size: 10px; fill: #111; }

.combo { display: flex; align-items: center; gap: 4px; height: 24px; padding: 0 5px; background: #e8e8f3; }
.combo svg { width: 10px; height: 10px; }
.combo select { flex: 1; min-width: 0; appearance: none; outline: 0; }
.loadcase { width: 163px; }
.coords { width: 150px; }
.swatch { width: 14px; height: 14px; background: #cff; }
.badge { width: 38px; height: 16px; line-height: 17px; text-align: center; color: #fff; background: #000; }
.rule { width: 1px; height: 18px; margin-right: 25px; background: #fff; }
.step { display: grid; place-items: center; width: 20px; height: 24px; background: #e8e8f3; }
.step svg { width: 6px; height: 8px; }
.step.off { background: #cfcfcf; fill: #444; }

/* Work area */
.work { display: flex; flex: 1; gap: 5px; }
.navigator { position: relative; display: flex; flex-direction: column; width: 318px; }
.nav-head { display: flex; align-items: center; gap: 14px; height: 25px; padding: 0 8px 0 7px; background: #d7e4f2; }
.nav-head h2 { flex: 1; margin: 0; font-size: 14px; font-weight: 700; color: #333; }
.nav-head svg { width: 12px; height: 12px; }
.tree { flex: 1; margin-left: 1px; padding: 1px 0 3px 3px; border: 2px solid #c8c5d6; border-bottom: 0; background: #fff; overflow: hidden; }
.row { display: flex; height: 23px; }
.chev { width: 16px; height: 16px; margin: 3px 9px 0 0; }
.item { display: flex; flex: 1; align-items: center; gap: 6px; margin: 0 12px 0 -2px; padding: 0 0 1px 1px; border: 1px solid transparent; white-space: nowrap; }
.ico { width: 20px; height: 20px; }
.file { font-weight: 700; }
.selected { background: #cce8ff; border: 1px dotted #000; }

.tabs { display: flex; margin-left: 1px; height: 30px; border-left: 2px solid #c8c5d6; border-bottom: 1px solid #c8c5d6; }
.tab { display: grid; place-items: center; width: 38px; height: 28px; border: solid #c8c5d6; border-width: 1px 2px 1px 0; background: #ebebef; }
.tab svg { width: 20px; height: 20px; }
.tab.active { width: 39px; height: 29px; border-width: 0 1px 0 0; background: #fff; }
.tabs-rest { flex: 1; border-top: 1px solid #c8c5d6; }

/* Context menu */
.context {
  position: absolute;
  left: 238px;
  bottom: 2px;
  z-index: 2;
  width: 463px;
  padding: 3px;
  border: 1px solid #c9c9c9;
  background: #f6f6f6;
  box-shadow: 3px 3px 3px rgba(0, 0, 0, .5);
}
.entry { display: flex; align-items: center; gap: 15px; width: 100%; height: 25px; padding-left: 3px; text-align: left; white-space: nowrap; }
.entry svg { width: 20px; height: 20px; }
.entry span { flex: 1; }
.entry kbd { width: 82px; }
.hot { background: #93cbfa; }
.context hr { height: 1px; margin: 4px 6px; border: 0; background: #d5d5d5; }

/* Model view */
.viewport { position: relative; flex: 1; min-width: 0; background: #fff; }
.model { width: 100%; height: auto; }
.cube { position: absolute; top: 3px; right: 9px; width: 150px; height: 160px; }
.axis { font-size: 46px; font-weight: 700; }
.z { fill: #8c8ce8; }
.y { fill: #7be07b; }
.x { fill: #e58787; }

/* Status bar */
.status { display: flex; height: 28px; padding-top: 3px; }
.hint { flex: 1; padding: 3px 0 0 6px; white-space: nowrap; }
.snap { padding: 1px 4px 0; border: 1px solid transparent; }
.snap.on { border-color: #d5d5d5; background: #ededed; outline: 0; }
.cell { padding: 3px 0 0 4px; border-right: 1px solid #dcdcdc; white-space: nowrap; }
.c100 { width: 101px; }
.c131 { width: 131px; }
.c194 { width: 194px; }
.c81 { width: 81px; }
.c94 { width: 94px; }
.grip { align-self: flex-end; width: 12px; height: 12px; margin: 0 2px 1px 5px; }
```
